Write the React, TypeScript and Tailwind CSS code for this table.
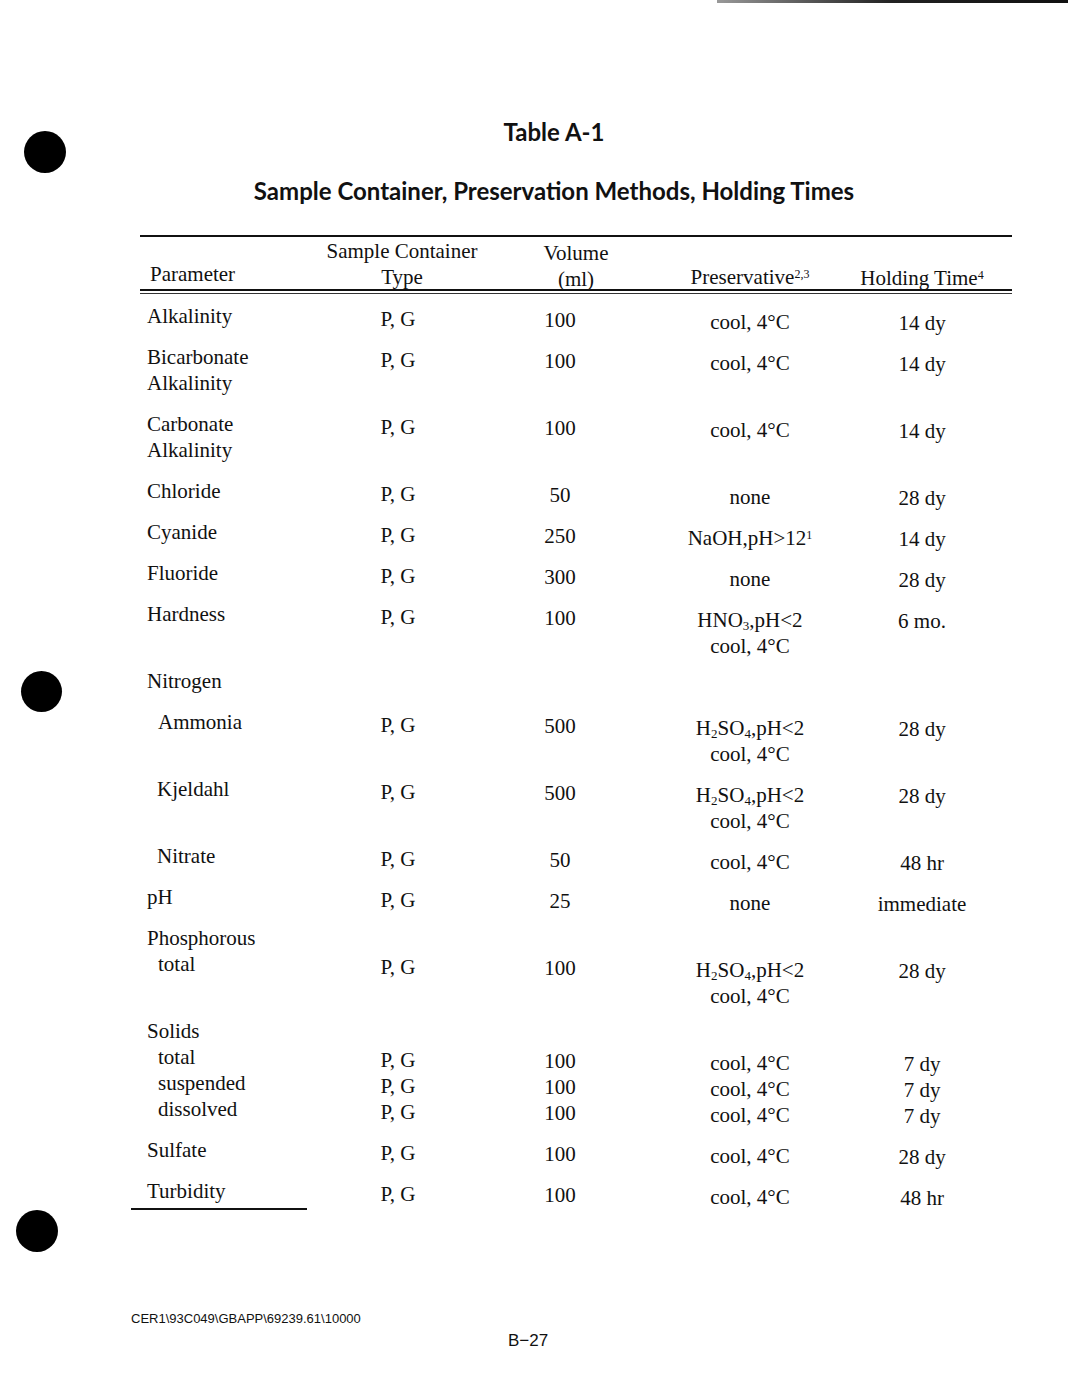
import React from "react";

type Row = {
  param: React.ReactNode[];
  valueLine?: number; // index of line at which values start
  type?: string[];
  vol?: string[];
  pres?: React.ReactNode[];
  hold?: string[];
};

const H2SO4 = (
  <>
    H<sub className="text-[13px]">2</sub>SO<sub className="text-[13px]">4</sub>,pH&lt;2
  </>
);
const HNO3 = (
  <>
    HNO<sub className="text-[13px]">3</sub>,pH&lt;2
  </>
);

const rows: Row[] = [
  { param: ["Alkalinity"], type: ["P, G"], vol: ["100"], pres: ["cool, 4°C"], hold: ["14 dy"] },
  { param: ["Bicarbonate", "Alkalinity"], type: ["P, G"], vol: ["100"], pres: ["cool, 4°C"], hold: ["14 dy"] },
  { param: ["Carbonate", "Alkalinity"], type: ["P, G"], vol: ["100"], pres: ["cool, 4°C"], hold: ["14 dy"] },
  { param: ["Chloride"], type: ["P, G"], vol: ["50"], pres: ["none"], hold: ["28 dy"] },
  {
    param: ["Cyanide"],
    type: ["P, G"],
    vol: ["250"],
    pres: [
      <>
        NaOH,pH&gt;12<sup className="text-[12px]">1</sup>
      </>,
    ],
    hold: ["14 dy"],
  },
  { param: ["Fluoride"], type: ["P, G"], vol: ["300"], pres: ["none"], hold: ["28 dy"] },
  { param: ["Hardness"], type: ["P, G"], vol: ["100"], pres: [HNO3, "cool, 4°C"], hold: ["6 mo."] },
  { param: ["Nitrogen"] },
  { param: [<span className="pl-[11px]">Ammonia</span>], type: ["P, G"], vol: ["500"], pres: [H2SO4, "cool, 4°C"], hold: ["28 dy"] },
  { param: [<span className="pl-[10px]">Kjeldahl</span>], type: ["P, G"], vol: ["500"], pres: [H2SO4, "cool, 4°C"], hold: ["28 dy"] },
  { param: [<span className="pl-[10px]">Nitrate</span>], type: ["P, G"], vol: ["50"], pres: ["cool, 4°C"], hold: ["48 hr"] },
  { param: ["pH"], type: ["P, G"], vol: ["25"], pres: ["none"], hold: ["immediate"] },
  {
    param: ["Phosphorous", <span className="pl-[11px]">total</span>],
    valueLine: 1,
    type: ["P, G"],
    vol: ["100"],
    pres: [H2SO4, "cool, 4°C"],
    hold: ["28 dy"],
  },
  {
    param: [
      "Solids",
      <span className="pl-[11px]">total</span>,
      <span className="pl-[11px]">suspended</span>,
      <span className="pl-[11px]">dissolved</span>,
    ],
    valueLine: 1,
    type: ["P, G", "P, G", "P, G"],
    vol: ["100", "100", "100"],
    pres: ["cool, 4°C", "cool, 4°C", "cool, 4°C"],
    hold: ["7 dy", "7 dy", "7 dy"],
  },
  { param: ["Sulfate"], type: ["P, G"], vol: ["100"], pres: ["cool, 4°C"], hold: ["28 dy"] },
  { param: ["Turbidity"], type: ["P, G"], vol: ["100"], pres: ["cool, 4°C"], hold: ["48 hr"] },
];

function Lines({ items, skip = 0 }: { items?: React.ReactNode[]; skip?: number }) {
  if (!items) return null;
  return (
    <div className="flex flex-col">
      {Array.from({ length: skip }).map((_, i) => (
        <div key={"s" + i} className="h-[26px]" />
      ))}
      {items.map((it, i) => (
        <div key={i} className="h-[26px] whitespace-nowrap">
          {it}
        </div>
      ))}
    </div>
  );
}

export default function App() {
  const serif = { fontFamily: '"Liberation Serif", "Times New Roman", serif' };
  return (
    <div className="relative w-[1068px] h-[1380px] overflow-hidden bg-white text-[#111]">
      {/* scan artifacts: top edge line and punch holes */}
      <div className="absolute right-0 top-0 h-[3px] w-[351px] bg-gradient-to-r from-[#999] via-[#222] to-[#111]" />
      <div className="absolute left-[24px] top-[131px] h-[42px] w-[42px] rounded-full bg-black" />
      <div className="absolute left-[21px] top-[671px] h-[41px] w-[41px] rounded-full bg-black" />
      <div className="absolute left-[16px] top-[1210px] h-[42px] w-[42px] rounded-full bg-black" />

      <div className="flex flex-col">
        {/* Titles */}
        <div
          className="mt-[116px] flex flex-col items-center font-bold text-[24px] leading-[32px] pl-[40px]"
          style={{ fontFamily: 'Lato, "Open Sans", sans-serif' }}
        >
          <div>Table A-1</div>
          <div className="mt-[27px]">Sample Container, Preservation Methods, Holding Times</div>
        </div>

        {/* Table */}
        <div className="ml-[140px] mt-[28px] w-[872px] text-[21px] leading-[26px]" style={serif}>
          <div className="h-[2px] bg-[#111]" />
          {/* header */}
          <div className="mt-[1px] grid h-[51px] grid-cols-[190px_136px_188px_192px_166px]">
            <div className="pl-[10px] pt-[23px] whitespace-nowrap">Parameter</div>
            <div className="flex flex-col items-center pl-[8px] whitespace-nowrap">
              <div className="h-[26px]">Sample Container</div>
              <div className="h-[26px]">Type</div>
            </div>
            <div className="flex flex-col items-center pl-[32px] translate-y-[2px] whitespace-nowrap">
              <div className="h-[26px]">Volume</div>
              <div className="h-[26px]">(ml)</div>
            </div>
            <div className="pt-[26px] text-center whitespace-nowrap">
              Preservative<sup className="text-[12px]">2,3</sup>
            </div>
            <div className="pt-[27px] pr-[14px] text-center whitespace-nowrap">
              Holding Time<sup className="text-[12px]">4</sup>
            </div>
          </div>
          <div className="h-[2px] bg-[#111]" />
          <div className="mt-[2px] h-[1px] bg-[#333]" />

          {/* body */}
          <div className="mt-[9px] flex flex-col gap-[15px]">
            {rows.map((r, i) => (
              <div key={i} className="grid grid-cols-[190px_136px_188px_192px_166px]">
                <div className="pl-[7px]">
                  <Lines items={r.param} />
                </div>
                <div className="text-center translate-y-[3px]">
                  <Lines items={r.type} skip={r.valueLine} />
                </div>
                <div className="text-center translate-y-[4px]">
                  <Lines items={r.vol} skip={r.valueLine} />
                </div>
                <div className="text-center translate-y-[6px]">
                  <Lines items={r.pres} skip={r.valueLine} />
                </div>
                <div className="pr-[14px] text-center translate-y-[7px]">
                  <Lines items={r.hold} skip={r.valueLine} />
                </div>
              </div>
            ))}
          </div>
          <div className="-ml-[9px] mt-[4px] h-[2px] w-[176px] bg-[#111]" />
        </div>

        {/* Footer */}
        <div
          className="ml-[131px] mt-[101px] text-[13px] leading-[16px]"
          style={{ fontFamily: '"Liberation Sans", Arial, sans-serif' }}
        >
          CER1\93C049\GBAPP\69239.61\10000
        </div>
        <div
          className="ml-[508px] mt-[3px] text-[17px] leading-[22px]"
          style={{ fontFamily: '"Liberation Sans", Arial, sans-serif' }}
        >
          B−27
        </div>
      </div>
    </div>
  );
}
